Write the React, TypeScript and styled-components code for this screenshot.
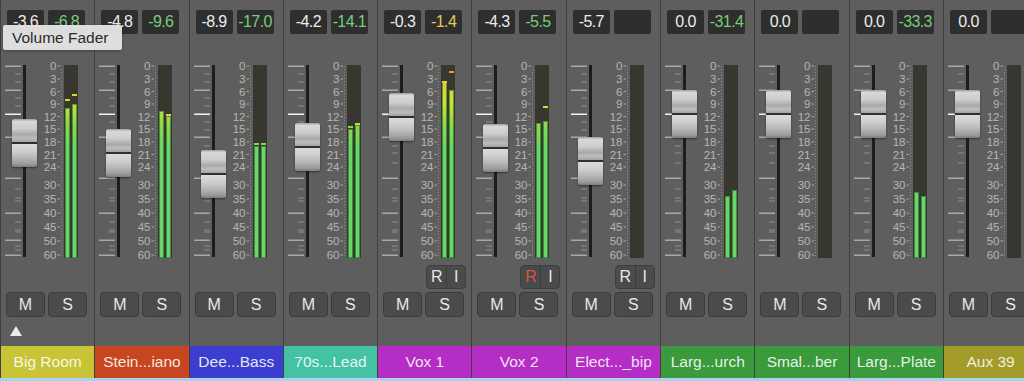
import React from 'react';
import styled, { createGlobalStyle, css } from 'styled-components';

const Global = createGlobalStyle`
  html, body { margin: 0; padding: 0; background: #5d5d5d; overflow: hidden; }
  body { font-family: "Liberation Sans", Arial, sans-serif; }
  * { box-sizing: border-box; }
`;

type Tone = 'white' | 'green' | 'yellow';

interface StripData {
  name: string;
  color: string;
  vol: string;
  peak: string;
  peakTone: Tone;
  fader: number; // global y of cap center
  meter?: [number, number];
  peaks?: (number | null)[];
  ri?: boolean;
  rActive?: boolean;
  triangle?: boolean;
}

const MAGENTA = '#b42ec6';
const GREEN = '#3b9a3c';

const strips: StripData[] = [
  { name: 'Big Room', color: '#c9c437', vol: '-3.6', peak: '-6.8', peakTone: 'green', fader: 143, meter: [108, 104], peaks: [99, 94], triangle: true },
  { name: 'Stein...iano', color: '#c7461f', vol: '-4.8', peak: '-9.6', peakTone: 'green', fader: 153, meter: [111, 116], peaks: [null, 114] },
  { name: 'Dee...Bass', color: '#3c3ed0', vol: '-8.9', peak: '-17.0', peakTone: 'green', fader: 174, meter: [146, 146], peaks: [143, 143] },
  { name: '70s...Lead', color: '#43c3a3', vol: '-4.2', peak: '-14.1', peakTone: 'green', fader: 147, meter: [129, 125], peaks: [126, 123] },
  { name: 'Vox 1', color: MAGENTA, vol: '-0.3', peak: '-1.4', peakTone: 'yellow', fader: 117, meter: [82, 90], peaks: [81, 71], ri: true },
  { name: 'Vox 2', color: MAGENTA, vol: '-4.3', peak: '-5.5', peakTone: 'green', fader: 148, meter: [123, 121], peaks: [null, 106], ri: true, rActive: true },
  { name: 'Elect..._bip', color: MAGENTA, vol: '-5.7', peak: '', peakTone: 'green', fader: 161, ri: true },
  { name: 'Larg...urch', color: GREEN, vol: '0.0', peak: '-31.4', peakTone: 'green', fader: 114, meter: [196, 190] },
  { name: 'Smal...ber', color: GREEN, vol: '0.0', peak: '', peakTone: 'green', fader: 114 },
  { name: 'Larg...Plate', color: GREEN, vol: '0.0', peak: '-33.3', peakTone: 'green', fader: 114, meter: [192, 196] },
  { name: 'Aux 39', color: '#a29b29', vol: '0.0', peak: '', peakTone: 'green', fader: 114 },
];

// geometry (global y)
const SECTION_TOP = 60;
const METER_TOP = 65;
const METER_BOTTOM = 258;
const METER_H = METER_BOTTOM - METER_TOP;

const faderTicks: [number, 'L' | 'S' | 'W'][] = [
  [66, 'L'], [74, 'S'], [82, 'S'], [90, 'L'], [98, 'S'], [106, 'S'], [114, 'W'],
  [122, 'S'], [130, 'S'], [137, 'L'], [146, 'S'], [153, 'S'], [163, 'S'],
  [178, 'L'], [189, 'S'], [198, 'S'], [201, 'S'], [213, 'L'], [222, 'S'],
  [230, 'S'], [232, 'S'], [240, 'L'], [246, 'S'], [250, 'S'], [255, 'L'],
];

const scaleMarks: [string, number][] = [
  ['0', 66], ['3', 79], ['6', 91.5], ['9', 104], ['12', 116.5], ['15', 129],
  ['18', 142], ['21', 154.5], ['24', 167], ['30', 185], ['35', 199], ['40', 213],
  ['45', 227], ['50', 241], ['60', 255],
];

const peakColor = (y: number) => {
  if (y < 76) return '#eaa032';
  if (y < 100) return '#e2cf3c';
  if (y < 125) return '#c6dc3f';
  return '#8ad452';
};

const Page = styled.div`
  position: relative;
  width: 1024px;
  height: 381px;
  overflow: hidden;
  display: flex;
  flex-direction: column;
`;

const StripRow = styled.div`
  display: flex;
  height: 378px;
`;

const SelectionBar = styled.div`
  height: 3px;
  background: #a9d2f2;
`;

const Strip = styled.div`
  flex: 0 0 94.3px;
  width: 94.3px;
  display: flex;
  flex-direction: column;
  background: #5e5e5e;
  border-left: 1px solid #3f3f3f;
`;

const DisplayRow = styled.div`
  display: flex;
  gap: 4px;
  margin-top: 10px;
  padding-left: 6px;
`;

const toneColor: Record<Tone, string> = {
  white: '#ececec',
  green: '#78cd78',
  yellow: '#e2cd52',
};

const DisplayBox = styled.div<{ $tone: Tone }>`
  width: 37px;
  height: 24px;
  border-radius: 2px;
  background: #2e2e2e;
  color: ${(p) => toneColor[p.$tone]};
  font-size: 16px;
  letter-spacing: -0.6px;
  display: flex;
  align-items: center;
  justify-content: center;
`;

const FaderSection = styled.div`
  display: flex;
  height: 200px;
  margin-top: 26px;
`;

const FaderArea = styled.div`
  position: relative;
  width: 40px;
  height: 200px;
`;

const Cap = styled.div`
  position: absolute;
  left: 11px;
  width: 25px;
  height: 48px;
  border-radius: 2px;
  background: linear-gradient(
    to bottom,
    #9e9e9e 0%,
    #d8d8d8 5%,
    #cdcdcd 20%,
    #a9a9a9 32%,
    #bdbdbd 40%,
    #a2a2a2 48%,
    #2b2b2b 49%,
    #2b2b2b 51%,
    #dadada 53%,
    #cfcfcf 66%,
    #b8b8b8 80%,
    #9a9a9a 94%,
    #7c7c7c 100%
  );
  box-shadow: 0 1px 2px rgba(0, 0, 0, 0.45);
`;

const ScaleSvg = styled.svg`
  width: 23px;
  height: 200px;
  flex: 0 0 23px;
`;

const Meter = styled.div`
  position: relative;
  width: 14px;
  height: ${METER_H}px;
  margin-top: ${METER_TOP - SECTION_TOP}px;
  background: #37372f;
  display: flex;
  align-items: flex-end;
  gap: 2px;
  padding: 0 1px;
`;

const Bar = styled.div`
  width: 5px;
  background-image: linear-gradient(
    to bottom,
    #eea02c 0px,
    #e6cf3a 12px,
    #cde03f 38px,
    #8ad650 62px,
    #6bd56b 82px,
    #6bd56b 100%
  );
  background-size: 100% ${METER_H}px;
  background-position: bottom;
  background-repeat: no-repeat;
  box-shadow: inset 0 0 0 1px rgba(20, 90, 20, 0.55);
`;

const PeakMark = styled.div<{ $side: 0 | 1 }>`
  position: absolute;
  left: ${(p) => (p.$side === 0 ? 1 : 8)}px;
  width: 5px;
  height: 2px;
`;

const RIRow = styled.div`
  display: flex;
  height: 24px;
  margin-top: 5px;
  padding-left: 48px;
`;

const RIGroup = styled.div`
  display: flex;
  border-radius: 4px;
  overflow: hidden;
  border: 1px solid #3e3e3e;
  background: #4b4b4b;
`;

const RIButton = styled.div<{ $active?: boolean }>`
  width: 19px;
  height: 22px;
  display: flex;
  align-items: center;
  justify-content: center;
  font-size: 16px;
  color: #e6e6e6;
  & + & {
    border-left: 1px solid #3a3a3a;
  }
  ${(p) =>
    p.$active &&
    css`
      color: #e2513d;
      background: #454a4a;
    `}
`;

const MSRow = styled.div`
  display: flex;
  gap: 3px;
  height: 25px;
  margin-top: 3px;
  padding-left: 5px;
`;

const MSButton = styled.div`
  width: 39px;
  height: 25px;
  border-radius: 4px;
  background: #4b4b4b;
  border: 1px solid #3b3b3b;
  color: #e8e8e8;
  font-size: 16px;
  display: flex;
  align-items: center;
  justify-content: center;
`;

const TriangleRow = styled.div`
  height: 29px;
  padding-left: 9px;
  padding-top: 9px;
`;

const Triangle = styled.div`
  width: 0;
  height: 0;
  border-left: 6px solid transparent;
  border-right: 6px solid transparent;
  border-bottom: 10px solid #ececec;
`;

const NameLabel = styled.div<{ $bg: string }>`
  margin-top: auto;
  height: 32px;
  background: ${(p) => p.$bg};
  color: rgba(255, 255, 255, 0.88);
  font-size: 15.5px;
  display: flex;
  align-items: center;
  justify-content: center;
  white-space: nowrap;
  overflow: hidden;
`;

const Tooltip = styled.div`
  position: absolute;
  left: 3px;
  top: 25px;
  width: 119px;
  height: 25px;
  padding-left: 9px;
  display: flex;
  align-items: center;
  background: rgba(226, 226, 226, 0.97);
  color: #2b2b2b;
  font-size: 15.5px;
  border-radius: 2px;
  box-shadow: 0 1px 3px rgba(0, 0, 0, 0.3);
`;

const FaderDrawing: React.FC = () => (
  <svg width="40" height="200" style={{ display: 'block' }}>
    {faderTicks.map(([y, t], i) => {
      const ly = y - SECTION_TOP;
      const x1 = t === 'S' ? 14 : 4;
      return (
        <rect
          key={i}
          x={x1}
          y={ly - 0.5}
          width={20 - x1}
          height={t === 'S' ? 1 : 1.5}
          fill={t === 'W' ? '#f4f4f4' : t === 'L' ? '#a8a8a8' : '#8e8e8e'}
        />
      );
    })}
    <rect x={22} y={METER_TOP - SECTION_TOP} width={3} height={METER_H - 1} fill="#1d1d1d" />
  </svg>
);

const ScaleDrawing: React.FC = () => (
  <ScaleSvg viewBox="0 0 23 200">
    <line
      x1={20.5}
      x2={20.5}
      y1={METER_TOP - SECTION_TOP + 1}
      y2={METER_BOTTOM - SECTION_TOP - 2}
      stroke="#8c8c8c"
      strokeWidth={1}
      strokeDasharray="1 2"
    />
    {scaleMarks.map(([label, y]) => {
      const ly = y - SECTION_TOP;
      return (
        <g key={label}>
          <text
            x={15.5}
            y={ly + 4}
            textAnchor="end"
            fontSize="11.5"
            fill="#b6b6b6"
            fontFamily='"Liberation Sans", Arial, sans-serif'
          >
            {label}
          </text>
          <rect x={16.5} y={ly - 0.5} width={2.5} height={1} fill="#a8a8a8" />
        </g>
      );
    })}
  </ScaleSvg>
);

const ChannelStrip: React.FC<{ s: StripData }> = ({ s }) => (
  <Strip>
    <DisplayRow>
      <DisplayBox $tone="white">{s.vol}</DisplayBox>
      <DisplayBox $tone={s.peakTone}>{s.peak}</DisplayBox>
    </DisplayRow>
    <FaderSection>
      <FaderArea>
        <FaderDrawing />
        <Cap style={{ top: s.fader - 24 - SECTION_TOP }} />
      </FaderArea>
      <ScaleDrawing />
      <Meter>
        {s.meter &&
          s.meter.map((top, i) => (
            <Bar key={i} style={{ height: METER_BOTTOM - top }} />
          ))}
        {s.peaks &&
          s.peaks.map((p, i) =>
            p == null ? null : (
              <PeakMark
                key={`p${i}`}
                $side={i as 0 | 1}
                style={{ top: p - METER_TOP, background: peakColor(p) }}
              />
            )
          )}
      </Meter>
    </FaderSection>
    <RIRow>
      {s.ri && (
        <RIGroup>
          <RIButton $active={s.rActive}>R</RIButton>
          <RIButton>I</RIButton>
        </RIGroup>
      )}
    </RIRow>
    <MSRow>
      <MSButton>M</MSButton>
      <MSButton>S</MSButton>
    </MSRow>
    <TriangleRow>{s.triangle && <Triangle />}</TriangleRow>
    <NameLabel $bg={s.color}>{s.name}</NameLabel>
  </Strip>
);

export default function App() {
  return (
    <Page>
      <Global />
      <StripRow>
        {strips.map((s) => (
          <ChannelStrip key={s.name} s={s} />
        ))}
      </StripRow>
      <SelectionBar />
      <Tooltip>Volume Fader</Tooltip>
    </Page>
  );
}
